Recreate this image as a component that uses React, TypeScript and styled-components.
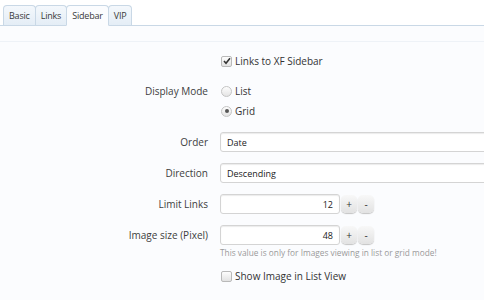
import React, { useState } from 'react';
import styled, { createGlobalStyle } from 'styled-components';

const GlobalStyle = createGlobalStyle`
    html, body {
        margin: 0;
        padding: 0;
        background: #fbfcfe;
        font-family: 'Open Sans', 'Noto Sans', sans-serif;
        color: #333;
    }
`;

const Page = styled.div`
    width: 484px;
    height: 300px;
    overflow: hidden;
    background: #fbfcfe;
`;

const TabBar = styled.div`
    display: flex;
    align-items: flex-end;
    height: 25px;
    padding-left: 3px;
    border-bottom: 1px solid #c9d8e6;
    background: #fff;
`;

const Tab = styled.div<{ active?: boolean }>`
    height: ${(p) => (p.active ? '21px' : '20px')};
    margin-bottom: ${(p) => (p.active ? '-1px' : '0')};
    padding: 0 5px;
    display: flex;
    align-items: center;
    font-size: 9px;
    letter-spacing: -0.2px;
    color: #3a3a3a;
    border: 1px solid #c9d8e6;
    border-bottom: ${(p) => (p.active ? '1px solid #fbfcfe' : 'none')};
    border-radius: 4px 4px 0 0;
    margin-right: -1px;
    background: ${(p) => (p.active ? '#fbfcfe' : 'linear-gradient(#f4f8fc, #e4edf6)')};
    box-sizing: border-box;
`;

const SubBar = styled.div`
    height: 15px;
    border-bottom: 1px solid #eef2f7;
`;

const Form = styled.div`
    display: grid;
    grid-template-columns: 208px 1fr;
    column-gap: 12px;
    padding-top: 10px;
`;

const Label = styled.div<{ top?: number }>`
    text-align: right;
    font-size: 10px;
    color: #404040;
    padding-top: ${(p) => p.top ?? 0}px;
`;

const Control = styled.div<{ gap?: number }>`
    display: flex;
    flex-direction: column;
    margin-bottom: ${(p) => p.gap ?? 0}px;
`;

const Row = styled.label`
    display: flex;
    align-items: center;
    height: 18px;
    font-size: 10px;
    color: #333;
    gap: 3px;
`;

const Box = styled.span`
    width: 9px;
    height: 9px;
    border: 1px solid #b9b9b9;
    border-radius: 2px;
    background: linear-gradient(#fdfdfd, #e2e2e2);
    margin-left: 1px;
    display: flex;
    align-items: center;
    justify-content: center;
`;

const Radio = styled.span<{ checked?: boolean }>`
    width: 9px;
    height: 9px;
    border: 1px solid #c4c4c4;
    border-radius: 50%;
    background: linear-gradient(#fdfdfd, #e4e4e4);
    margin-left: 1px;
    display: flex;
    align-items: center;
    justify-content: center;
    &::after {
        content: '';
        display: ${(p) => (p.checked ? 'block' : 'none')};
        width: 4px;
        height: 4px;
        border-radius: 50%;
        background: #555;
    }
`;

const TextInput = styled.div<{ width?: string; align?: string }>`
    width: ${(p) => p.width ?? 'calc(100% + 20px)'};
    height: 20px;
    box-sizing: border-box;
    border: 1px solid #d4d4d4;
    border-radius: 3px;
    background: #fff;
    box-shadow: inset 0 1px 1px #ececec;
    font-size: 9px;
    color: #222;
    display: flex;
    align-items: center;
    justify-content: ${(p) => (p.align === 'right' ? 'flex-end' : 'flex-start')};
    padding: 0 6px;
`;

const Spinner = styled.div`
    display: flex;
    align-items: center;
`;

const SpinButton = styled.button`
    width: 16px;
    height: 18px;
    margin-left: 1px;
    border: none;
    border-radius: 5px;
    background: linear-gradient(#f8f8f8, #e2e2e2);
    box-shadow: 0 1px 1px #c4c4c4;
    font-size: 10px;
    font-family: 'Open Sans', sans-serif;
    color: #333;
    padding: 0;
    flex-shrink: 0;
    display: flex;
    align-items: center;
    justify-content: center;
`;

const Hint = styled.div`
    font-size: 8.3px;
    color: #9a9a9a;
    margin-top: 2px;
`;

const Check = () => (
    <svg width="8" height="8" viewBox="0 0 8 8">
        <path d="M1 4 L3 6.2 L7 1.2" stroke="#333" strokeWidth="1.6" fill="none" />
    </svg>
);

const App: React.FC = () => {
    const [limit] = useState(12);
    const [size] = useState(48);

    return (
        <Page>
            <GlobalStyle />
            <TabBar>
                <Tab>Basic</Tab>
                <Tab>Links</Tab>
                <Tab active>Sidebar</Tab>
                <Tab>VIP</Tab>
            </TabBar>
            <SubBar />
            <Form>
                <Label />
                <Control gap={12}>
                    <Row><Box><Check /></Box>Links to XF Sidebar</Row>
                </Control>

                <Label top={2}>Display Mode</Label>
                <Control gap={12}>
                    <Row><Radio />List</Row>
                    <Row style={{ marginTop: 2 }}><Radio checked />Grid</Row>
                </Control>

                <Label top={3}>Order</Label>
                <Control gap={11}>
                    <TextInput>Date</TextInput>
                </Control>

                <Label top={3}>Direction</Label>
                <Control gap={11}>
                    <TextInput>Descending</TextInput>
                </Control>

                <Label top={3}>Limit Links</Label>
                <Control gap={11}>
                    <Spinner>
                        <TextInput width="120px" align="right">{limit}</TextInput>
                        <SpinButton>+</SpinButton>
                        <SpinButton>-</SpinButton>
                    </Spinner>
                </Control>

                <Label top={3}>Image size (Pixel)</Label>
                <Control gap={9}>
                    <Spinner>
                        <TextInput width="120px" align="right">{size}</TextInput>
                        <SpinButton>+</SpinButton>
                        <SpinButton>-</SpinButton>
                    </Spinner>
                    <Hint>This value is only for Images viewing in list or grid mode!</Hint>
                </Control>

                <Label />
                <Control>
                    <Row><Box />Show Image in List View</Row>
                </Control>
            </Form>
        </Page>
    );
};

export default App;
